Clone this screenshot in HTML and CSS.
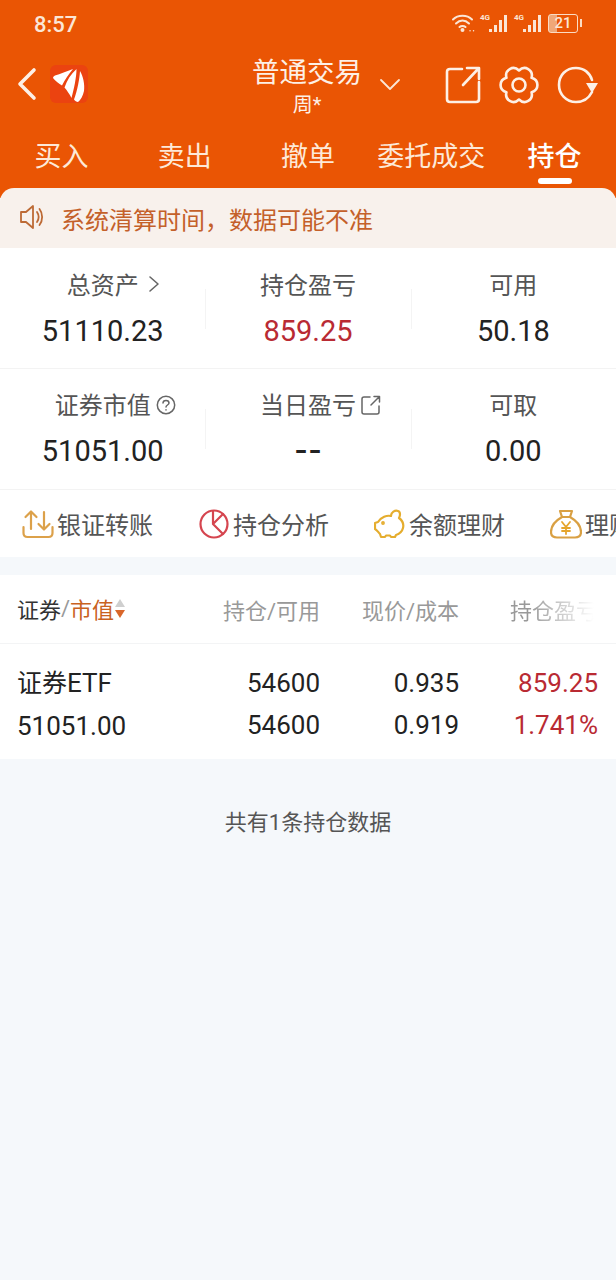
FILE: index.html
```html
<!DOCTYPE html>
<html lang="zh-CN">
<head>
    <meta charset="UTF-8">
    <meta name="viewport" content="width=device-width, initial-scale=1.0">
    <title>普通交易</title>
    <link rel="stylesheet" href="styles.css">
</head>
<body>
    <header class="top">
        <div class="status">
            <span class="time">8:57</span>
            <div class="status-icons">
                <svg class="wifi" width="23" height="18" viewBox="0 0 23 18" fill="none" stroke="#fbe6d6" stroke-width="2" stroke-linecap="round">
                    <path d="M1 5.500C6 .5 15 .5 20 5.500"/>
                    <path d="M4 9.500C8 5.500 13 5.500 17 9.500"/>
                    <path d="M7.500 13C9 11.500 12 11.500 13.500 13"/>
                    <circle cx="10.500" cy="16" r="1" fill="#fbe6d6"/>
                    <path d="M18 16.800h.1M21.500 16.800h.1" stroke-width="1.400"/>
                </svg>
                <div class="signal">
                    <span class="net">4G</span>
                    <span class="bars"><i class="b1"></i><i class="b2"></i><i class="b3"></i><i class="b4"></i></span>
                </div>
                <div class="signal">
                    <span class="net">4G</span>
                    <span class="bars"><i class="b1"></i><i class="b2"></i><i class="b3"></i><i class="b4"></i></span>
                </div>
                <div class="battery"><span class="battery-level">21</span></div>
                <i class="battery-tip"></i>
            </div>
        </div>

        <nav class="navbar">
            <div class="nav-left">
                <svg width="20" height="34" viewBox="0 0 20 34" fill="none" stroke="#fdf0e6" stroke-width="3.600" stroke-linecap="round" stroke-linejoin="round">
                    <path d="M17 3L3 17L17 31"/>
                </svg>
                <div class="logo">
                    <svg width="38" height="38" viewBox="0 0 38 38" fill="#fff">
                        <path d="M3 13C3 12 4 11 5 10.500C10 9 17 6 23 4C19 9 15 14 12 20.500C9 18.500 5.500 16 3 13Z"/>
                        <path d="M14.500 22.500C17 15 21 9 26.500 4C26.500 12 24 24 21.500 33C19.500 29 17 25.500 14.500 22.500Z"/>
                        <path d="M24 34.500C27.500 25 29.500 14 30 6C33 11 35 19 34 26C33 31 30.500 35 28 37C26.500 37 25 36 24 34.500Z"/>
                    </svg>
                </div>
            </div>
            <div class="nav-title">
                <div class="title">普通交易</div>
                <div class="subtitle">周*</div>
            </div>
            <div class="nav-right">
                <svg class="caret" width="22" height="14" viewBox="0 0 22 14" fill="none" stroke="#fbe6d6" stroke-width="1.800" stroke-linecap="round" stroke-linejoin="round">
                    <path d="M2 2L11 11L20 2"/>
                </svg>
                <div class="nav-icons">
                    <svg width="36" height="38" viewBox="0 0 36 38" fill="none" stroke="#fdf0e6" stroke-width="2.600" stroke-linecap="round" stroke-linejoin="round">
                        <path d="M17 3H5C3 3 2 4 2 6V33C2 35 3 36 5 36H31C33 36 34 35 34 33V16"/>
                        <path d="M18 19L33 3M22 2H34V13"/>
                    </svg>
                    <svg width="40" height="38" viewBox="0 0 40 38" fill="none" stroke="#fdf0e6" stroke-width="2.600" stroke-linejoin="round">
                        <path d="M32.560 11.750C40.380 13.920 40.380 24.080 32.560 26.250C34.590 34.110 25.790 39.190 20 33.500C14.210 39.190 5.410 34.110 7.440 26.250C-.38 24.080 -.38 13.920 7.440 11.750C5.410 3.890 14.210 -1.190 20 4.500C25.790 -1.190 34.590 3.890 32.560 11.750Z"/>
                        <circle cx="20" cy="19" r="6.500"/>
                    </svg>
                    <svg width="41" height="38" viewBox="0 0 41 38" fill="none" stroke="#fdf0e6" stroke-width="2.600" stroke-linecap="round">
                        <path d="M35 26C32 32 26 36 19 36C9 36 2 28 2 19C2 9 9 2 19 2C27 2 33 7 35 14"/>
                        <path d="M29 17H41L35 27Z" fill="#fdf0e6" stroke="none"/>
                    </svg>
                </div>
            </div>
        </nav>

        <div class="tabs">
            <span class="tab">买入</span>
            <span class="tab">卖出</span>
            <span class="tab">撤单</span>
            <span class="tab">委托成交</span>
            <span class="tab active">持仓</span>
        </div>
    </header>

    <div class="notice">
        <svg width="26" height="26" viewBox="0 0 26 26" fill="none" stroke="#bd6a35" stroke-width="1.800" stroke-linejoin="round" stroke-linecap="round">
            <path d="M2 8H7L14 2V24L7 18H2Z"/>
            <path d="M18 8C20 11 20 15 18 18"/>
            <path d="M20.500 5C24 9.500 24 16.500 20.500 21"/>
        </svg>
        <span>系统清算时间，数据可能不准</span>
    </div>

    <section class="summary">
        <div class="summary-row">
            <div class="cell">
                <div class="cell-label"><span class="label-text">总资产<svg class="label-icon gap-wide" width="12" height="18" viewBox="0 0 12 18" fill="none" stroke="#666" stroke-width="1.600" stroke-linecap="round" stroke-linejoin="round"><path d="M2 2L10 9L2 16"/></svg></span></div>
                <div class="cell-value">51110.23</div>
            </div>
            <div class="cell">
                <div class="cell-label">持仓盈亏</div>
                <div class="cell-value red">859.25</div>
            </div>
            <div class="cell">
                <div class="cell-label">可用</div>
                <div class="cell-value">50.18</div>
            </div>
        </div>
        <div class="summary-row">
            <div class="cell">
                <div class="cell-label"><span class="label-text">证券市值<svg class="label-icon" width="20" height="20" viewBox="0 0 20 20" fill="none" stroke="#666" stroke-width="1.500" stroke-linecap="round"><circle cx="10" cy="10" r="8.700"/><path d="M7 8C7 4.500 13 4.500 13 8C13 10 10 10 10 12"/><path d="M10 14.800v.2"/></svg></span></div>
                <div class="cell-value">51051.00</div>
            </div>
            <div class="cell">
                <div class="cell-label"><span class="label-text">当日盈亏<svg class="label-icon" width="20" height="20" viewBox="0 0 20 20" fill="none" stroke="#666" stroke-width="1.500" stroke-linecap="round" stroke-linejoin="round"><path d="M9 2H3C2 2 1 3 1 4V17C1 18 2 19 3 19H16C17 19 18 18 18 17V11"/><path d="M10 10L18 2M13 1.500H18.500V7"/></svg></span></div>
                <div class="cell-value dash">--</div>
            </div>
            <div class="cell">
                <div class="cell-label">可取</div>
                <div class="cell-value">0.00</div>
            </div>
        </div>
    </section>

    <div class="shortcuts">
        <div class="shortcut">
            <svg width="32" height="30" viewBox="0 0 32 30" fill="none" stroke="#dca14a" stroke-width="2.200" stroke-linecap="round" stroke-linejoin="round">
                <path d="M9 20V3M3.500 8L9 2.500L14.500 8"/>
                <path d="M22 3V20M16.500 15L22 20.500L27.500 15"/>
                <path d="M1.500 18V24C1.500 27 3 28 5.500 28H26.500C29 28 30.500 27 30.500 24V18"/>
            </svg>
            <span>银证转账</span>
        </div>
        <div class="shortcut">
            <svg width="32" height="30" viewBox="0 0 32 30" fill="none" stroke="#d5454f" stroke-width="2.200" stroke-linecap="round" stroke-linejoin="round">
                <circle cx="16" cy="15" r="13.500"/>
                <path d="M15 2V15L25 25M15 15L25 5"/>
            </svg>
            <span>持仓分析</span>
        </div>
        <div class="shortcut">
            <svg width="32" height="30" viewBox="0 0 32 30" fill="none" stroke="#e5ad2e" stroke-width="2.200" stroke-linejoin="round" stroke-linecap="round">
                <path d="M4 13C7 8 13 6 17 7C17 3 21 1 24 2C27 3 26 7 25 9C29 12 30 15 29 19C28 23 25 25 22 26L21 28H17L16 26.500H12L11 28H7L6 25C4 23 3 21 1 20V14Z"/>
                <circle cx="9" cy="14" r=".8"/>
            </svg>
            <span>余额理财</span>
        </div>
        <div class="shortcut">
            <svg width="32" height="30" viewBox="0 0 32 30" fill="none" stroke="#d9a043" stroke-width="2.200" stroke-linejoin="round" stroke-linecap="round">
                <path d="M10 2H22L20 8H12Z"/>
                <path d="M12 8C5 12 1 18 1 23C1 27 4 28.500 7 28.500H25C28 28.500 31 27 31 23C31 18 27 12 20 8"/>
                <path d="M12 13L16 18L20 13M16 18V25M12 19H20M12 22H20" stroke="#e5a52c" stroke-width="1.800"/>
            </svg>
            <span>理财</span>
        </div>
    </div>

    <section class="holdings">
        <div class="table-row table-head">
            <div class="head-first">证券<em>/</em><b>市值</b>
                <svg width="12" height="21" viewBox="0 0 12 21"><path d="M6 1L11 9H1Z" fill="#cfcfcf"/><path d="M1 12H11L6 20Z" fill="#d9662a"/></svg>
            </div>
            <div class="num">持仓/可用</div>
            <div class="num">现价/成本</div>
            <div class="num fade">持仓盈亏</div>
        </div>
        <div class="table-row table-body">
            <div class="name-col"><span class="name-cjk">证券</span>ETF<br>51051.00</div>
            <div class="num">54600<br>54600</div>
            <div class="num">0.935<br>0.919</div>
            <div class="num red">859.25<br>1.741%</div>
        </div>
    </section>

    <p class="count">共有1条持仓数据</p>
</body>
</html>
```

FILE: styles.css
```css
* {
    box-sizing: border-box;
}
body {
    margin: 0;
    height: 1280px;
    overflow: hidden;
    background-color: #f5f8fb;
    font-family: Roboto, "Noto Sans CJK SC", sans-serif;
    color: #222;
}
svg {
    display: block;
    flex: none;
}

/* orange header */
.top {
    background-color: #ea5504;
    color: #fde9d8;
    height: 198px;
}
.status {
    height: 48px;
    padding: 0 34px;
    display: flex;
    align-items: center;
    justify-content: space-between;
}
.time {
    font-size: 22px;
    font-weight: 500;
    color: #fbe6d6;
}
.status-icons {
    display: flex;
    align-items: center;
    margin-top: -2px;
}
.wifi {
    margin-right: 5px;
}
.signal {
    display: flex;
    align-items: flex-end;
    height: 18px;
    margin-right: 7px;
}
.net {
    font-size: 8px;
    line-height: 8px;
    font-weight: 700;
    color: #fbe6d6;
    align-self: flex-start;
    margin-right: -1px;
}
.bars {
    display: flex;
    align-items: flex-end;
    gap: 2px;
}
.bars i {
    display: block;
    width: 3px;
    background-color: #fbe6d6;
}
.b1 { height: 3px; }
.b2 { height: 7px; }
.b3 { height: 12px; }
.b4 { height: 17px; }
.battery {
    width: 30px;
    height: 19px;
    border: 1.500px solid #fbdcc4;
    border-radius: 3px;
    font-size: 15px;
    line-height: 16px;
    font-weight: 500;
    text-align: center;
    color: #fbe6d6;
    background: linear-gradient(90deg, #f0a878 30%, transparent 30%);
}
.battery-tip {
    display: block;
    width: 2px;
    height: 8px;
    margin-left: 2px;
    background-color: #fbdcc4;
}

.navbar {
    height: 77px;
    display: grid;
    grid-template-columns: 242px 130px 1fr;
    align-items: center;
}
.nav-left {
    display: flex;
    align-items: center;
    padding-left: 17px;
    margin-top: -5px;
}
.logo {
    width: 38px;
    height: 38px;
    margin-left: 13px;
    background-color: #eb4310;
    border-radius: 6px;
}
.nav-title {
    text-align: center;
    margin-top: -1px;
}
.title {
    font-size: 27.500px;
    line-height: 38px;
    color: #fdf0e6;
}
.subtitle {
    font-size: 20px;
    line-height: 26px;
    color: #fdf0e6;
}
.nav-right {
    display: flex;
    align-items: center;
    padding-right: 18px;
    margin-top: -3px;
}
.caret {
    margin-left: 7px;
}
.nav-icons {
    display: flex;
    align-items: center;
    gap: 18px;
    margin-left: auto;
}

.tabs {
    display: grid;
    grid-template-columns: repeat(5, 1fr);
    height: 63px;
    text-align: center;
}
.tab {
    font-size: 27px;
    line-height: 64px;
    position: relative;
    white-space: nowrap;
}
.tab.active {
    color: #fff;
    font-weight: 500;
}
.tab.active::after {
    content: "";
    position: absolute;
    left: 45px;
    bottom: 5px;
    width: 34px;
    height: 6px;
    border-radius: 3px;
    background-color: #fff;
}

/* notice sits over the bottom of the header */
.notice {
    height: 60px;
    margin-top: -10px;
    position: relative;
    padding-left: 19px;
    display: flex;
    align-items: center;
    gap: 16px;
    background-color: #f8f1ec;
    border-radius: 14px 14px 0 0;
    font-size: 24px;
    color: #c4602a;
}
.notice svg {
    margin-top: -3px;
}

.summary {
    background-color: #fff;
}
.summary-row {
    display: grid;
    grid-template-columns: repeat(3, 1fr);
    height: 121px;
    padding-top: 16px;
    border-bottom: 1px solid #f3f3f3;
}
.summary-row:first-child {
    padding-top: 17px;
}
.cell {
    height: 86px;
    text-align: center;
    position: relative;
}
.cell + .cell::before {
    content: "";
    position: absolute;
    left: 0;
    top: 24px;
    height: 40px;
    width: 1px;
    background-color: #f4f4f4;
}
.cell-label {
    font-size: 24px;
    line-height: 42px;
    color: #555;
}
.label-text {
    display: inline-block;
    position: relative;
}
.label-icon {
    position: absolute;
    left: 100%;
    top: 10px;
    margin-left: 5px;
}
.gap-wide {
    margin-left: 9px;
}
.cell-value {
    font-size: 29px;
    line-height: 48px;
    color: #222;
}
.dash {
    font-size: 40px;
    letter-spacing: 3px;
    text-indent: 3px;
}
.red {
    color: #b92a33;
}

.shortcuts {
    display: flex;
    height: 67px;
    overflow: hidden;
    background-color: #fff;
}
.shortcut {
    flex: none;
    width: 176px;
    padding-left: 22px;
    display: flex;
    align-items: center;
    gap: 3px;
    font-size: 24px;
    color: #555;
    white-space: nowrap;
}

.holdings {
    margin-top: 18px;
    background-color: #fff;
}
.table-row {
    display: grid;
    grid-template-columns: 1fr 110px 139px 139px;
    padding: 0 18px;
}
.table-head {
    height: 69px;
    align-items: center;
    font-size: 22px;
    color: #999;
    border-bottom: 1px solid #f3f4f5;
}
.head-first {
    display: flex;
    align-items: center;
    margin: -2px 0 0 -1px;
    color: #333;
}
.head-first em {
    font-style: normal;
    color: #999;
}
.head-first b {
    font-weight: 400;
    color: #c9621f;
}
.num {
    text-align: right;
    white-space: nowrap;
}
.fade {
    -webkit-mask-image: linear-gradient(90deg, #000 50%, transparent 97%);
    mask-image: linear-gradient(90deg, #000 50%, transparent 97%);
}
.table-body {
    height: 115px;
    padding-top: 18px;
    font-size: 26px;
    line-height: 42px;
}
.name-col {
    margin-left: -1px;
}
.name-cjk {
    font-size: 25px;
}
.count {
    margin: 45px 0 0;
    text-align: center;
    font-size: 22px;
    line-height: 38px;
    color: #555;
}
```
